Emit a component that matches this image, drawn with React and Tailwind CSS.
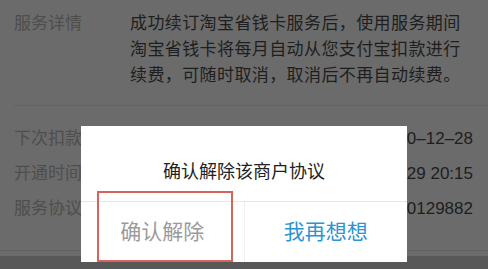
import React from 'react';

const rows = [
  { label: '下次扣款时间', value: '2020–12–28' },
  { label: '开通时间', value: '2019–12–29 20:15' },
  { label: '服务协议', value: '2019120129882' },
];

const App = () => {
  return (
    <div
      className="relative w-[488px] h-[269px] overflow-hidden bg-[#585858]"
      style={{ fontFamily: '"Liberation Sans", "Noto Sans CJK SC", sans-serif' }}
    >
      {/* page under the mask */}
      <div className="bg-[#6b6b6b]">
        <div className="flex pl-[14px] pt-[11px] pb-[16px] text-[17px] leading-[26px]">
          <div className="w-[116px] shrink-0 text-[#4e4e4e]">服务详情</div>
          <div className="w-[345px] text-[#1e1e1e] tracking-[0.4px]">
            成功续订淘宝省钱卡服务后，使用服务期间淘宝省钱卡将每月自动从您支付宝扣款进行续费，可随时取消，取消后不再自动续费。
          </div>
        </div>
        <div className="ml-[14px] h-px bg-[#626262]" />
        <div className="flex flex-col pt-[20px] pb-[28px] gap-[9px] pl-[14px] pr-[15px] text-[17px] leading-[26px]">
          {rows.map((r) => (
            <div key={r.label} className="flex justify-between">
              <span className="text-[#4e4e4e]">{r.label}</span>
              <span className="text-[#1e1e1e]">{r.value}</span>
            </div>
          ))}
        </div>
        <div className="h-px bg-[#616161]" />
        <div className="h-[5px]" />
      </div>

      {/* dialog */}
      <div className="absolute left-[81px] top-[126px] w-[326px] h-[136px] bg-white flex flex-col">
        <div className="h-[75px] flex items-center justify-center pt-[18px] text-[18px] text-[#222]">
          确认解除该商户协议
        </div>
        <div className="h-px bg-[#e6e6e6]" />
        <div className="flex-1 flex">
          <button className="flex-1 flex items-center justify-center text-[21px] text-[#9b9b9b]">
            确认解除
          </button>
          <div className="w-px bg-[#f0f0f0]" />
          <button className="flex-1 flex items-center justify-center text-[21px] text-[#2d94d2]">
            我再想想
          </button>
        </div>
        <div className="absolute left-[16px] top-[65px] w-[136px] h-[71px] border-2 border-[#d8625c]" />
      </div>
    </div>
  );
};

export default App;
